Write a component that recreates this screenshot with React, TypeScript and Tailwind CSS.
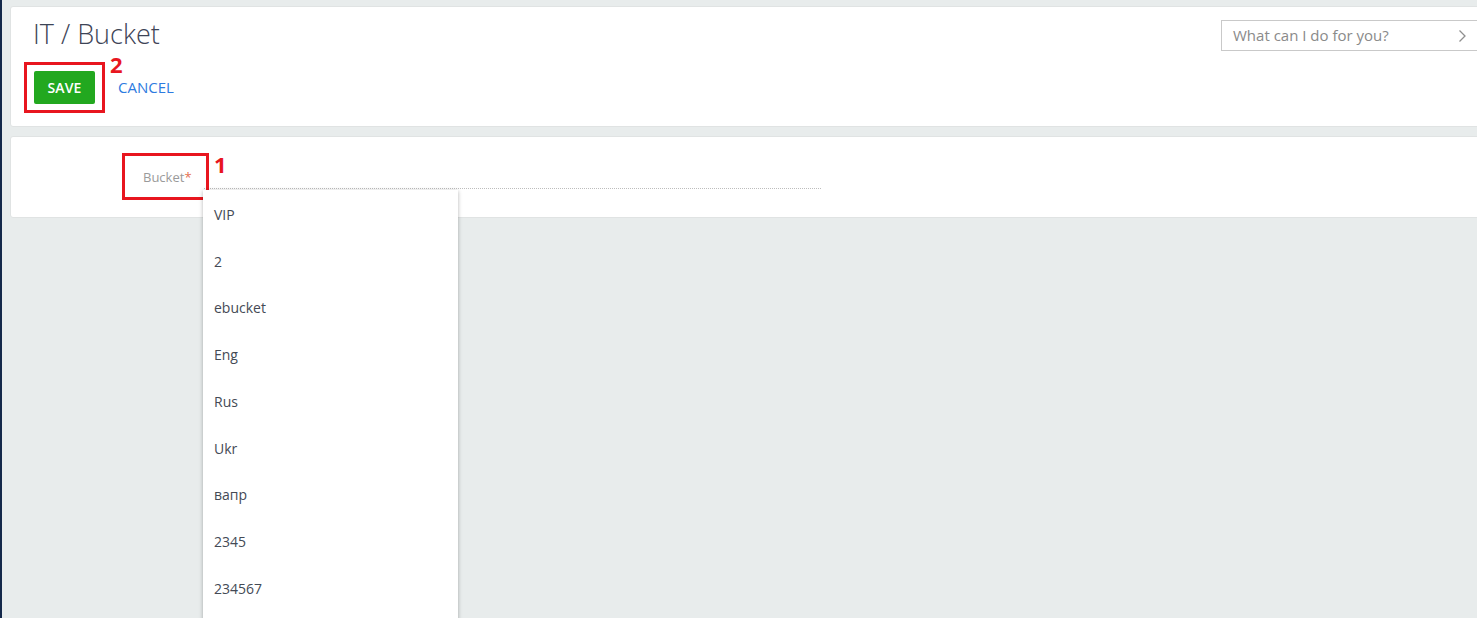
import React from "react";

const items = ["VIP", "2", "ebucket", "Eng", "Rus", "Ukr", "вапр", "2345", "234567", "1"];

export default function App() {
  return (
    <div
      className="relative flex w-[1477px] h-[618px] overflow-hidden bg-[#e8ecec]"
      style={{ fontFamily: '"Open Sans", "Noto Sans", sans-serif' }}
    >
      <div className="w-[2px] shrink-0 bg-[#14284a]" />
      <div className="flex-1 pl-[8px] pt-[6px] flex flex-col gap-[9px] mr-[-20px]">
        {/* header card */}
        <div className="relative h-[121px] bg-white rounded-[3px] border border-[#e0e3e3] pl-[22px] pt-[10px] flex justify-between">
          <div className="flex flex-col">
            <div className="text-[27px] leading-[34px] font-light text-[#3d4456]">IT / Bucket</div>
            <div className="flex items-center mt-[20px] ml-[1px]">
              <button className="h-[33px] w-[61px] rounded-[2px] bg-[#22a81f] text-white text-[14px] font-semibold tracking-[0.1px]">
                SAVE
              </button>
              <span className="ml-[23px] text-[15px] text-[#2d7be0]">CANCEL</span>
            </div>
          </div>
          {/* search */}
          <div className="mt-[3px] w-[275px] h-[31px] border border-[#c9c9c9] bg-white flex items-center pl-[11px] pr-[28px] justify-between">
            <span className="text-[15px] text-[#8a8a8a]">What can I do for you?</span>
            <svg width="9" height="14" viewBox="0 0 9 14" fill="none">
              <path d="M1.5 1.5 L7 7 L1.5 12.5" stroke="#8f8f8f" strokeWidth="1.3" />
            </svg>
          </div>
          {/* annotation 2 */}
          <div className="absolute left-[13px] top-[55px] w-[81px] h-[51px] border-[3px] border-[#e8161f]" />
          <div className="absolute left-[99px] top-[43px] text-[22px] font-bold text-[#e8161f] leading-[28px]">2</div>
        </div>
        {/* form card */}
        <div className="relative h-[82px] bg-white rounded-[3px] border border-[#e0e3e3] pl-[132px] pt-[31px]">
          <div className="flex items-end">
            <div className="w-[61px] text-[13px] leading-[18px] text-[#9a9a9a]">
              Bucket<span className="text-[#e5704f]">*</span>
            </div>
            <div className="w-[617px] mb-[-3px] border-t border-dotted border-[#bdbdbd]" />
          </div>
          {/* annotation 1 */}
          <div className="absolute left-[111px] top-[16px] w-[87px] h-[47px] border-[3px] border-[#e8161f]" />
          <div className="absolute left-[203px] top-[13px] text-[22px] font-bold text-[#e8161f] leading-[28px]">1</div>
        </div>
      </div>
      {/* dropdown */}
      <div className="absolute left-[203px] top-[190px] w-[255px] h-[500px] bg-white shadow-[0_1px_4px_rgba(0,0,0,0.3)]">
        <ul className="pt-[1px] flex flex-col">
          {items.map((it) => (
            <li key={it} className="h-[46.75px] flex items-center pl-[11px] text-[14px] text-[#444a55]">
              {it}
            </li>
          ))}
        </ul>
      </div>
    </div>
  );
}
